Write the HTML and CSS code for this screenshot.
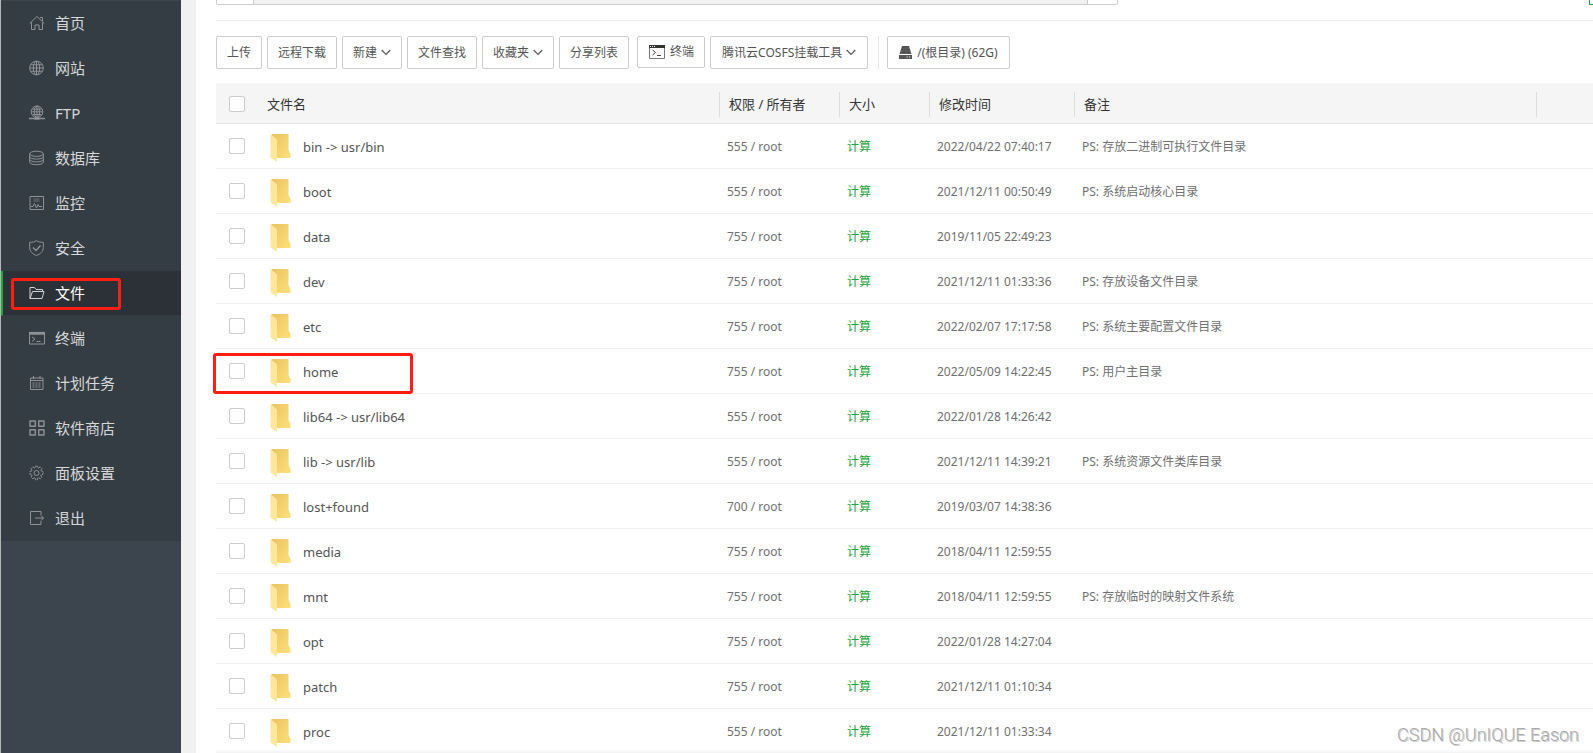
FILE: index.html
```html
<!DOCTYPE html>
<html lang="zh-CN">
<head>
<meta charset="utf-8">
<title>文件</title>
<link rel="stylesheet" href="styles.css">
</head>
<body>
<svg class="defs" aria-hidden="true">
  <defs>
    <linearGradient id="fg-back" x1="0" y1="0" x2="1" y2="1"><stop offset="0" stop-color="#e9c45f"/><stop offset="1" stop-color="#ffdf7c"/></linearGradient>
    <linearGradient id="fg-front" x1="0" y1="0" x2="0" y2="1"><stop offset="0" stop-color="#fde59b"/><stop offset="1" stop-color="#ffe79c"/></linearGradient>
    <symbol id="folder" viewBox="0 0 20 29">
      <path d="M1 1h17v16l2 4v4H6z" fill="url(#fg-back)"/>
      <path d="M0 1l6.500 5.500V29L0 24.500z" fill="url(#fg-front)"/>
    </symbol>
    <symbol id="chevron" viewBox="0 0 10 7"><path d="M.7 1L5 5.500 9.300 1" fill="none" stroke="#555" stroke-width="1.100"/></symbol>
  </defs>
</svg>
<div class="app">
  <nav class="sidebar">
    <ul class="menu">
      <li><a href="#"><svg viewBox="0 0 16 16"><path d="M.7 8.500L8 1.500l7.300 7M2.500 7.500v7H6V10h4v4.500h3.500v-7M11 2.500h2.500v3.500"/></svg>首页</a></li>
      <li><a href="#"><svg viewBox="0 0 16 16"><circle cx="7.500" cy="8" r="6.800"/><ellipse cx="7.500" cy="8" rx="3.200" ry="6.800"/><path d="M1 8h13M7.500 1.500v13M2 4.800h11M2 11.200h11"/></svg>网站</a></li>
      <li><a href="#"><svg viewBox="0 0 16 16"><circle cx="8" cy="6.800" r="5.800"/><ellipse cx="8" cy="6.800" rx="2.700" ry="5.800"/><path d="M2.500 6.800h11M8 1.500v12M3.500 4.200h9M3.500 9.500h9"/><path d="M0 13.500h16M5.500 14h5" stroke-width="1.600"/></svg>FTP</a></li>
      <li><a href="#"><svg viewBox="0 0 16 16"><ellipse cx="7.500" cy="3.800" rx="6.800" ry="2.600"/><path d="M.7 3.800v8.400c0 3.300 13.600 3.300 13.600 0V3.800M.7 6.600c0 3.300 13.600 3.300 13.600 0M.7 9.400c0 3.300 13.600 3.300 13.600 0"/></svg>数据库</a></li>
      <li><a href="#"><svg viewBox="0 0 16 16"><path d="M1 1.500h13.500v13H1z"/><path d="M4.500 4h6M4.500 6h6" opacity=".6"/><path d="M2 11.500h2l1.500-3 2 4.500 1.500-3.500 1 2h3"/></svg>监控</a></li>
      <li><a href="#"><svg viewBox="0 0 16 16"><path d="M7.500.6c2 1.500 4 1.700 6.800 1.700v5.200c0 4-3 6.700-6.800 8C3.700 14.200.7 11.500.7 7.500V2.300c2.800 0 4.800-.2 6.800-1.700z"/><path d="M4 7.500l3 3 4.500-5" stroke-width="1.400"/></svg>安全</a></li>
      <li class="active"><a href="#"><svg viewBox="0 0 16 16"><path d="M1 13.500V2.500h4.500l1.500 2h6.500v2M1 13.500l2.500-7H15l-2 7z"/></svg>文件</a><span class="mark mark-menu"></span></li>
      <li><a href="#"><svg viewBox="0 0 16 16"><path d="M.5 2.500h15v11.500H.5z"/><path d="M0 3.300h16" stroke-width="2.800"/><path d="M3 7l3 2-3 2.500M7.500 11.500h4"/></svg>终端</a></li>
      <li><a href="#"><svg viewBox="0 0 16 16"><path d="M1.500 3h12.500v11.500H1.500zM1.500 5.500H14M4.500 1v3M11 1v3"/><path d="M3.500 8h9M3.500 10h9M3.500 12h9" stroke-dasharray="2 1"/></svg>计划任务</a></li>
      <li><a href="#"><svg viewBox="0 0 16 16"><path d="M1 1h5.300v5.300H1zM9.700 1H15v5.300H9.700zM1 9.700h5.300V15H1zM9.700 9.700H15V15H9.700z" stroke-width="1.400" stroke-linejoin="round"/></svg>软件商店</a></li>
      <li><a href="#"><svg viewBox="0 0 16 16"><circle cx="7.500" cy="8" r="2.500"/><path d="M6.500 1.200h2l.6 2 2.200-1.300 1.600 1.600-1.200 2.100 2.300.8v2.800l-2.300.8 1.200 2.100-1.600 1.600-2.200-1.200-.6 2.200h-2l-.6-2.200-2.200 1.200-1.600-1.600 1.200-2.100-2.300-.8V6.400l2.300-.8-1.200-2.100 1.600-1.600 2.200 1.300z" stroke-dasharray="3 .7"/></svg>面板设置</a></li>
      <li><a href="#"><svg viewBox="0 0 16 16"><path d="M12 5V1.500H1.500v13H12V11M6 8h8.500M12 5.500L14.500 8 12 10.500"/></svg>退出</a></li>
    </ul>
  </nav>
  <main class="content">
    <div class="pathbar">
      <div class="path"><button type="button" class="path-btn back" aria-label="back"></button><input class="path-input" type="text" aria-label="path"><button type="button" class="path-btn" aria-label="refresh"></button></div>
      <button type="button" class="green-btn" aria-label="search"></button>
    </div>
    <div class="toolbar">
      <button type="button">上传</button>
      <button type="button">远程下载</button>
      <button type="button">新建<svg class="chev"><use href="#chevron"/></svg></button>
      <button type="button">文件查找</button>
      <button type="button">收藏夹<svg class="chev"><use href="#chevron"/></svg></button>
      <button type="button">分享列表</button>
      <button type="button" class="terminal"><svg class="term" viewBox="0 0 16 14"><path d="M.5 1v12.500h15V1" fill="none" stroke="#777"/><path d="M0 0h16v3H0z" fill="#333"/><path d="M1 1.500h1M3 1.500h1M5 1.500h1" stroke="#fff"/><path d="M3.500 5l3 2.500-3 2.500M8 10.500h4" fill="none" stroke="#444"/></svg>终端</button>
      <button type="button" class="wide">腾讯云COSFS挂载工具<svg class="chev"><use href="#chevron"/></svg></button>
      <span class="divider"></span>
      <button type="button" class="wide"><svg class="disk" viewBox="0 0 13 13"><path d="M3 0h7l2.500 8H.5zM0 9h13v4H0z" fill="#555"/><path d="M7.500 11h1.200M10 11h1.200" stroke="#fff"/></svg>/(根目录) (62G)</button>
    </div>
    <table class="files">
      <colgroup><col class="c-check"><col class="c-name"><col class="c-perm"><col class="c-size"><col class="c-time"><col class="c-note"><col class="c-end"></colgroup>
      <thead><tr><th><input type="checkbox" aria-label="all"></th><th>文件名</th><th class="sep">权限 / 所有者</th><th class="sep">大小</th><th class="sep">修改时间</th><th class="sep">备注</th><th class="sep"></th></tr></thead>
      <tbody>
        <tr><td><input type="checkbox" aria-label="bin"></td><td><a class="name" href="#"><svg><use href="#folder"/></svg>bin -&gt; usr/bin</a></td><td>555 / root</td><td><a class="calc" href="#">计算</a></td><td>2022/04/22 07:40:17</td><td>PS: 存放二进制可执行文件目录</td><td></td></tr>
        <tr><td><input type="checkbox" aria-label="boot"></td><td><a class="name" href="#"><svg><use href="#folder"/></svg>boot</a></td><td>555 / root</td><td><a class="calc" href="#">计算</a></td><td>2021/12/11 00:50:49</td><td>PS: 系统启动核心目录</td><td></td></tr>
        <tr><td><input type="checkbox" aria-label="data"></td><td><a class="name" href="#"><svg><use href="#folder"/></svg>data</a></td><td>755 / root</td><td><a class="calc" href="#">计算</a></td><td>2019/11/05 22:49:23</td><td></td><td></td></tr>
        <tr><td><input type="checkbox" aria-label="dev"></td><td><a class="name" href="#"><svg><use href="#folder"/></svg>dev</a></td><td>755 / root</td><td><a class="calc" href="#">计算</a></td><td>2021/12/11 01:33:36</td><td>PS: 存放设备文件目录</td><td></td></tr>
        <tr><td><input type="checkbox" aria-label="etc"></td><td><a class="name" href="#"><svg><use href="#folder"/></svg>etc</a></td><td>755 / root</td><td><a class="calc" href="#">计算</a></td><td>2022/02/07 17:17:58</td><td>PS: 系统主要配置文件目录</td><td></td></tr>
        <tr><td class="marked"><input type="checkbox" aria-label="home"><span class="mark mark-row"></span></td><td><a class="name" href="#"><svg><use href="#folder"/></svg>home</a></td><td>755 / root</td><td><a class="calc" href="#">计算</a></td><td>2022/05/09 14:22:45</td><td>PS: 用户主目录</td><td></td></tr>
        <tr><td><input type="checkbox" aria-label="lib64"></td><td><a class="name" href="#"><svg><use href="#folder"/></svg>lib64 -&gt; usr/lib64</a></td><td>555 / root</td><td><a class="calc" href="#">计算</a></td><td>2022/01/28 14:26:42</td><td></td><td></td></tr>
        <tr><td><input type="checkbox" aria-label="lib"></td><td><a class="name" href="#"><svg><use href="#folder"/></svg>lib -&gt; usr/lib</a></td><td>555 / root</td><td><a class="calc" href="#">计算</a></td><td>2021/12/11 14:39:21</td><td>PS: 系统资源文件类库目录</td><td></td></tr>
        <tr><td><input type="checkbox" aria-label="lost+found"></td><td><a class="name" href="#"><svg><use href="#folder"/></svg>lost+found</a></td><td>700 / root</td><td><a class="calc" href="#">计算</a></td><td>2019/03/07 14:38:36</td><td></td><td></td></tr>
        <tr><td><input type="checkbox" aria-label="media"></td><td><a class="name" href="#"><svg><use href="#folder"/></svg>media</a></td><td>755 / root</td><td><a class="calc" href="#">计算</a></td><td>2018/04/11 12:59:55</td><td></td><td></td></tr>
        <tr><td><input type="checkbox" aria-label="mnt"></td><td><a class="name" href="#"><svg><use href="#folder"/></svg>mnt</a></td><td>755 / root</td><td><a class="calc" href="#">计算</a></td><td>2018/04/11 12:59:55</td><td>PS: 存放临时的映射文件系统</td><td></td></tr>
        <tr><td><input type="checkbox" aria-label="opt"></td><td><a class="name" href="#"><svg><use href="#folder"/></svg>opt</a></td><td>755 / root</td><td><a class="calc" href="#">计算</a></td><td>2022/01/28 14:27:04</td><td></td><td></td></tr>
        <tr><td><input type="checkbox" aria-label="patch"></td><td><a class="name" href="#"><svg><use href="#folder"/></svg>patch</a></td><td>755 / root</td><td><a class="calc" href="#">计算</a></td><td>2021/12/11 01:10:34</td><td></td><td></td></tr>
        <tr><td><input type="checkbox" aria-label="proc"></td><td><a class="name" href="#"><svg><use href="#folder"/></svg>proc</a></td><td>555 / root</td><td><a class="calc" href="#">计算</a></td><td>2021/12/11 01:33:34</td><td></td><td></td></tr>
      </tbody>
    </table>
    <div class="bottom-shade"></div>
  </main>
  <div class="watermark">CSDN @UnIQUE Eason</div>
</div>
</body>
</html>
```
FILE: styles.css
```css
* { box-sizing: border-box; }
body {
  margin: 0;
  background: #f1f1f1;
  color: #707070;
  font: 12px/20px "Noto Sans", "Noto Sans CJK SC", sans-serif;
}
a { color: inherit; text-decoration: none; }
button { font: inherit; color: #555; }
.defs { position: absolute; width: 0; height: 0; }

.app {
  position: relative;
  display: flex;
  gap: 15px;
  height: 100vh;
  overflow: hidden;
}

/* Sidebar */
.sidebar {
  flex: 0 0 181px;
  border-left: 1px solid #b4b6b8;
  background: #3c444d;
}
.menu { list-style: none; margin: 0; padding: 1px 0 0; }
.menu li {
  position: relative;
  height: 45px;
  border-bottom: 1px solid #353d44;
  border-left: 2px solid #353d44;
  background: #353d44;
}
.menu li.active { border-left-color: #20a53a; background: #2c3138; }
.menu a {
  display: flex;
  align-items: center;
  gap: 10px;
  height: 44px;
  padding-left: 26px;
  color: #d6d7d9;
  font-size: 15px;
}
.menu .active a { color: #fff; }
.menu svg {
  width: 16px;
  height: 16px;
  fill: none;
  stroke: #8f9397;
}
.menu .active svg { stroke: #d0d2d4; }

/* Red annotation frames */
.mark {
  position: absolute;
  border: 3px solid #ff1e10;
  border-radius: 3px;
  pointer-events: none;
}
.mark-menu { left: 8px; top: 7px; width: 110px; height: 32px; }
.mark-row { left: -3px; top: 4px; width: 200px; height: 41px; z-index: 1; }

/* Main panel */
.content {
  position: relative;
  flex: 1;
  min-width: 0;
  padding-left: 20px;
  background: #fff;
}
.pathbar {
  display: flex;
  justify-content: space-between;
  height: 21px;
  border-bottom: 1px solid #ececec;
}
.path { display: flex; width: 902px; height: 5px; }
.path-btn, .path-input, .green-btn {
  border: 1px solid #ccc;
  border-top: 0;
  padding: 0;
  height: 5px;
  background: #fff;
}
.path-btn { width: 31px; border-radius: 0 0 2px 0; }
.path-btn.back { width: 38px; border-radius: 0 0 0 2px; }
.path-input { flex: 1; min-width: 0; border-width: 0 0 1px; background: #f1f1f1; }
.green-btn { width: 4px; border-color: #20a53a; border-right: 0; }

.toolbar {
  display: flex;
  gap: 5px;
  padding: 15px 0 14px;
}
.toolbar button {
  display: flex;
  align-items: center;
  height: 33px;
  padding: 0 10px;
  border: 1px solid #ccc;
  border-radius: 2px;
  background: #fff;
  white-space: nowrap;
}
.toolbar .wide { padding: 0 11px; }
.toolbar .terminal { height: 32px; margin-left: 3px; }
.chev { width: 10px; height: 7px; margin-left: 4px; }
.term { width: 16px; height: 14px; margin: 0 5px 0 1px; }
.disk { width: 13px; height: 13px; margin-right: 5px; }
.divider { width: 1px; margin: 0 3px 0 5px; background: #e6e6e6; }

/* File table */
.files {
  width: 100%;
  table-layout: fixed;
  border-collapse: separate;
  border-spacing: 0;
}
.c-check { width: 43px; }
.c-name { width: 460px; }
.c-perm { width: 120px; }
.c-size { width: 90px; }
.c-time { width: 145px; }
.c-end { width: 57px; }
.files th {
  height: 41px;
  padding: 2px 0 0 8px;
  border-bottom: 1px solid #e8e8e8;
  background: #f5f5f5;
  color: #333;
  font-size: 13px;
  font-weight: 400;
  text-align: left;
}
.files th.sep {
  padding-left: 10px;
  background: linear-gradient(#ddd, #ddd) 0 9px / 1px 25px no-repeat #f5f5f5;
}
.files td {
  height: 45px;
  padding: 2px 0 0 8px;
  border-bottom: 1px solid #f1f1f1;
}
.files th:first-child { padding: 2px 0 0 13px; }
.files td:first-child { padding: 0 0 0 13px; }
.files .marked { position: relative; }
.files input {
  appearance: none;
  display: block;
  width: 16px;
  height: 16px;
  margin: 0;
  border: 1px solid #ccc;
  border-radius: 2px;
  background: #fff;
}
.name {
  display: flex;
  align-items: center;
  gap: 12px;
  padding-left: 3px;
  color: #555;
  font-size: 13px;
}
.name svg { width: 21px; height: 29px; }
.calc { color: #20a53a; }

.bottom-shade {
  position: absolute;
  left: 20px;
  right: 0;
  bottom: 0;
  height: 4px;
  background: linear-gradient(#fff, #f3f3f3);
}
.watermark {
  position: absolute;
  right: 14px;
  bottom: 8px;
  color: #aaa;
  font: 300 18px/20px Roboto, sans-serif;
  text-shadow: 1px 1px 0 #ccc;
}
```
